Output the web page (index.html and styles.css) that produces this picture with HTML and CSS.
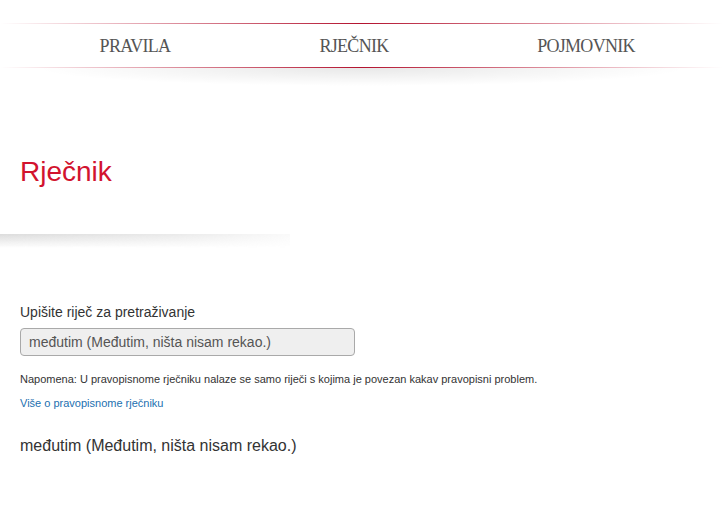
FILE: index.html
```html
<!DOCTYPE html>
<html lang="hr">
<head>
  <meta charset="UTF-8">
  <title>Rječnik</title>
  <link rel="stylesheet" href="styles.css">
</head>
<body>

<nav class="topnav">
  <div class="line"></div>
  <div class="menu">
    <a href="#">PRAVILA</a>
    <a href="#">RJEČNIK</a>
    <a href="#">POJMOVNIK</a>
  </div>
  <div class="line"></div>
  <div class="nav-shadow"></div>
</nav>

<div class="page-head">
  <h1>Rječnik</h1>
  <div class="head-shadow"></div>
</div>

<div class="search">
  <label for="word">Upišite riječ za pretraživanje</label>
  <input type="text" id="word" value="međutim (Međutim, ništa nisam rekao.)">
  <p class="note">Napomena: U pravopisnome rječniku nalaze se samo riječi s kojima je povezan kakav pravopisni problem.</p>
  <a href="#" class="more">Više o pravopisnome rječniku</a>
  <div class="result">međutim (Međutim, ništa nisam rekao.)</div>
</div>

</body>
</html>
```

FILE: styles.css
```css
body {
  margin: 0;
  background: #fff;
  font-family: "Liberation Sans", Arial, sans-serif;
  color: #333;
}

.topnav {
  position: relative;
  margin-top: 23px;
}

.line {
  height: 1px;
  background: linear-gradient(to right, rgba(190,30,60,0) 0%, rgba(190,30,60,0.3) 15%, #b3132f 50%, rgba(190,30,60,0.3) 85%, rgba(190,30,60,0) 100%);
}

.menu {
  display: grid;
  grid-template-columns: 220px 218px 246px;
  padding-left: 25px;
  height: 43px;
  align-items: center;
}

.menu a {
  text-align: center;
  font-family: "Liberation Serif", "Times New Roman", serif;
  font-size: 18px;
  letter-spacing: -0.7px;
  color: #555;
  text-decoration: none;
  padding-top: 2px;
}

.nav-shadow {
  position: absolute;
  left: 5%;
  right: 5%;
  top: 45px;
  height: 18px;
  background: radial-gradient(ellipse 50% 100% at 50% 0%, rgba(0,0,0,0.09), rgba(0,0,0,0));
}

.page-head {
  margin-top: 87px;
}

h1 {
  margin: 0 0 45px 20px;
  font-size: 28px;
  line-height: 34px;
  font-weight: normal;
  color: #d2132e;
}

.head-shadow {
  width: 290px;
  height: 14px;
  background: linear-gradient(to bottom, #dcdcdc, rgba(255,255,255,0));
  -webkit-mask-image: linear-gradient(to right, #000 0%, rgba(0,0,0,0.6) 60%, rgba(0,0,0,0.15) 100%);
  mask-image: linear-gradient(to right, #000 0%, rgba(0,0,0,0.6) 60%, rgba(0,0,0,0.15) 100%);
}

.search {
  padding: 0 20px;
  margin-top: 54px;
}

.search label {
  display: block;
  font-size: 14px;
  line-height: 20px;
  color: #333;
}

.search input {
  display: block;
  box-sizing: border-box;
  width: 335px;
  height: 28px;
  margin-top: 6px;
  padding: 0 8px;
  background: #efefef;
  border: 1px solid #a9a9a9;
  border-radius: 4px;
  font-family: "Liberation Sans", Arial, sans-serif;
  font-size: 14px;
  color: #555;
}

.note {
  margin: 15px 0 0;
  font-size: 11px;
  line-height: 16px;
  color: #333;
}

.more {
  display: block;
  margin-top: 8px;
  font-size: 11px;
  line-height: 16px;
  color: #1c70b0;
  text-decoration: none;
}

.result {
  margin-top: 24px;
  font-size: 16px;
  line-height: 22px;
  color: #333;
}
```
